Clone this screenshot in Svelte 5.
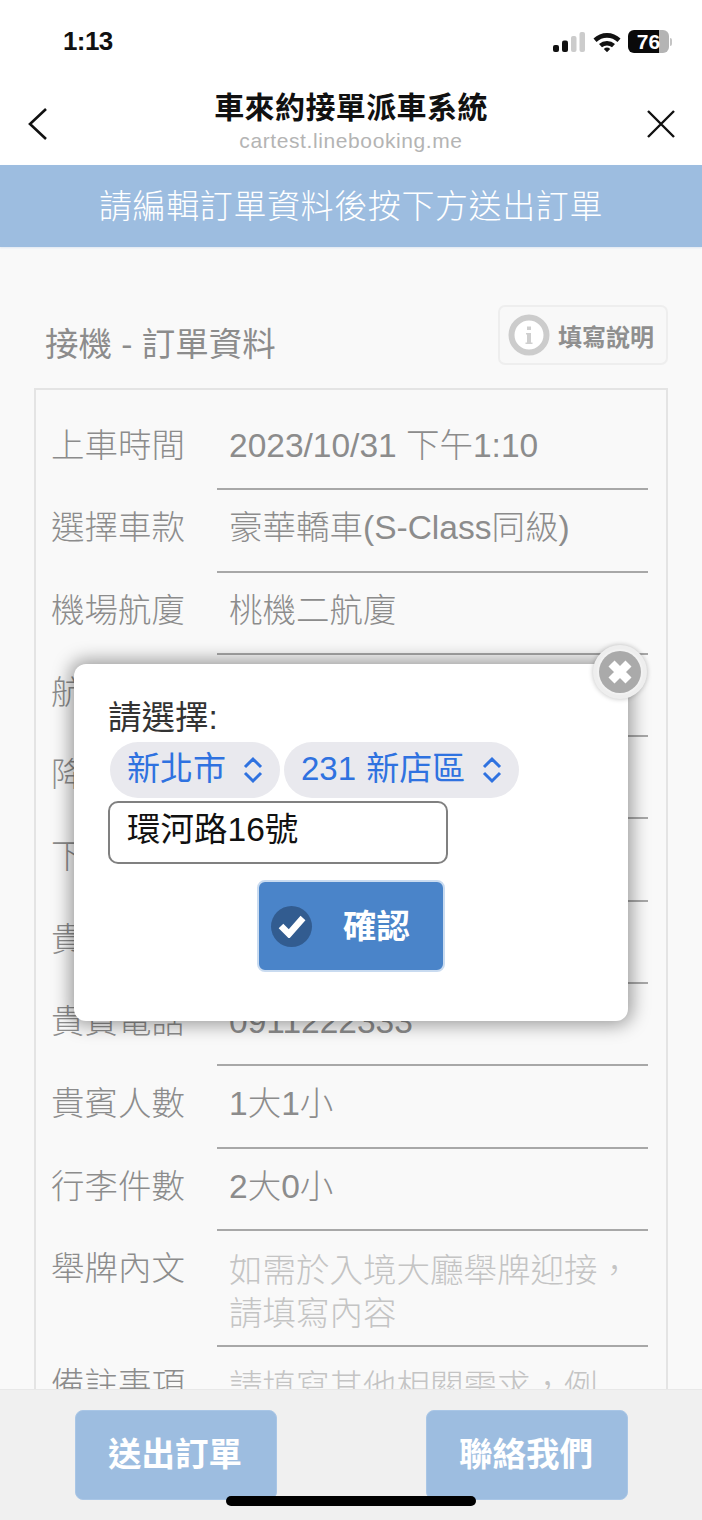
<script>
  const rows = [
    { label: '上車時間', value: '2023/10/31 下午1:10' },
    { label: '選擇車款', value: '豪華轎車(S-Class同級)' },
    { label: '機場航廈', value: '桃機二航廈' },
    { label: '航班編號', value: 'BR123' },
    { label: '降落時間', value: '下午1:10' },
    { label: '下車地址', value: '新北市新店區環河路16號' },
    { label: '貴賓姓名', value: '王小明' },
    { label: '貴賓電話', value: '0911222333' },
    { label: '貴賓人數', value: '1大1小' },
    { label: '行李件數', value: '2大0小' }
  ];
</script>

<div class="page">
  <header class="status">
    <span class="time">1:13</span>
    <div class="status-icons">
      <svg class="signal" width="32" height="20" viewBox="0 0 32 20" aria-hidden="true">
        <rect x="0" y="13" width="6" height="7" rx="2" fill="#111" />
        <rect x="9" y="8.500" width="6" height="11.500" rx="2" fill="#111" />
        <rect x="18" y="4" width="5.500" height="16" rx="2" fill="#ccc" />
        <rect x="26.500" y="0" width="5.500" height="20" rx="2" fill="#ccc" />
      </svg>
      <svg class="wifi" width="28" height="20" viewBox="0 0 28 20" aria-hidden="true">
        <path d="M0.500 6.500 A19.500 19.500 0 0 1 27.500 6.500 L24.500 10 A15 15 0 0 0 3.500 10 Z" fill="#111" />
        <path d="M6 12 A12 12 0 0 1 22 12 L19 15.200 A7.800 7.800 0 0 0 9 15.200 Z" fill="#111" />
        <path d="M10.800 17 A4.800 4.800 0 0 1 17.200 17 L14 20.200 Z" fill="#111" />
      </svg>
      <div class="battery">
        <div class="battery-body"><span>76</span></div>
        <i class="battery-cap"></i>
      </div>
    </div>
  </header>

  <nav class="browser">
    <svg class="nav-icon" width="24" height="36" viewBox="0 0 24 36" aria-hidden="true">
      <path d="M20 3 L4 18 L20 33" fill="none" stroke="#111" stroke-width="2.600" />
    </svg>
    <div class="browser-title">
      <strong>車來約接單派車系統</strong>
      <span>cartest.linebooking.me</span>
    </div>
    <svg class="nav-icon" width="32" height="32" viewBox="0 0 32 32" aria-hidden="true">
      <path d="M3 3 L29 29 M29 3 L3 29" fill="none" stroke="#111" stroke-width="2.400" />
    </svg>
  </nav>

  <div class="banner">請編輯訂單資料後按下方送出訂單</div>

  <main class="content">
    <div class="heading">
      <h1>接機 - 訂單資料</h1>
      <button class="help" type="button">
        <svg width="42" height="42" viewBox="0 0 42 42" aria-hidden="true">
          <circle cx="21" cy="21" r="17.500" fill="#fff" stroke="#ccc" stroke-width="6" />
          <path d="M19 12.500 h4 v3.500 h-4 Z M18 19 h5 v9.500 h1.500 v1.500 h-7 v-1.500 h1.500 v-8 h-1 Z" fill="#cfcfcf" />
        </svg>
        <span>填寫說明</span>
      </button>
    </div>

    <div class="form">
      {#each rows as row}
        <div class="row">
          <span class="label">{row.label}</span>
          <span class="value">{row.value}</span>
        </div>
      {/each}
      <div class="row tall">
        <span class="label">舉牌內文</span>
        <span class="value hint">如需於入境大廳舉牌迎接，<br />請填寫內容</span>
      </div>
      <div class="row tall">
        <span class="label">備註事項</span>
        <span class="value hint">請填寫其他相關需求，例</span>
      </div>
    </div>
  </main>

  <div class="overlay">
    <div class="modal">
      <button class="close" type="button" aria-label="關閉">
        <svg width="42" height="42" viewBox="0 0 42 42" aria-hidden="true">
          <circle cx="21" cy="21" r="21" fill="#aaa" />
          <path d="M12.500 12.500 L29.500 29.500 M29.500 12.500 L12.500 29.500" stroke="#fff" stroke-width="8.500" />
        </svg>
      </button>
      <p class="prompt">請選擇:</p>
      <div class="selects">
        <div class="select">
          <span>新北市</span>
          <svg width="22" height="28" viewBox="0 0 22 28" aria-hidden="true">
            <path d="M3 11 L11 3 L19 11 M3 17 L11 25 L19 17" fill="none" stroke="#2f72e0" stroke-width="3" />
          </svg>
        </div>
        <div class="select">
          <span>231 新店區</span>
          <svg width="22" height="28" viewBox="0 0 22 28" aria-hidden="true">
            <path d="M3 11 L11 3 L19 11 M3 17 L11 25 L19 17" fill="none" stroke="#2f72e0" stroke-width="3" />
          </svg>
        </div>
      </div>
      <div class="address">環河路16號</div>
      <button class="confirm" type="button">
        <span class="check">
          <svg width="28" height="24" viewBox="0 0 28 24" aria-hidden="true">
            <path d="M3 12 L11 20 L25 4" fill="none" stroke="#fff" stroke-width="6.500" />
          </svg>
        </span>
        <span class="confirm-text">確認</span>
      </button>
    </div>
  </div>

  <footer class="footer">
    <button type="button">送出訂單</button>
    <button type="button">聯絡我們</button>
    <i class="home-bar"></i>
  </footer>
</div>

<style>
  :global(body) {
    margin: 0;
    background: #f9f9f9;
  }

  .page {
    position: relative;
    width: 702px;
    height: 1520px;
    overflow: hidden;
    background: #f9f9f9;
    font-family: "Liberation Sans", "Noto Sans CJK TC", sans-serif;
  }

  .status {
    height: 80px;
    box-sizing: border-box;
    background: #fff;
    display: flex;
    align-items: flex-start;
    justify-content: space-between;
    padding: 26px 30px 0 63px;
  }

  .time {
    font-size: 26px;
    line-height: 31px;
    font-weight: 700;
    letter-spacing: -0.6px;
    color: #111;
  }

  .status-icons {
    display: flex;
    align-items: center;
    gap: 7.500px;
    height: 31px;
  }

  .battery {
    display: flex;
    align-items: center;
    gap: 1px;
  }

  .battery-body {
    width: 41px;
    height: 23px;
    border-radius: 6px;
    background: linear-gradient(90deg, #0a0a0a 76%, #b4b4b4 76%);
    display: flex;
    align-items: center;
    justify-content: center;
    color: #fff;
    font-size: 21px;
    font-weight: 700;
  }

  .battery-cap {
    width: 2px;
    height: 8px;
    border-radius: 0 2px 2px 0;
    background: #c4c4c4;
  }

  .browser {
    height: 85px;
    box-sizing: border-box;
    background: #fff;
    display: flex;
    align-items: center;
    justify-content: space-between;
    padding: 0 25px 0 26px;
  }

  .nav-icon {
    margin-top: 3px;
  }

  .browser-title {
    display: flex;
    flex-direction: column;
    align-items: center;
    margin: -3px 0 0 7px;
  }

  .browser-title strong {
    font-size: 30px;
    line-height: 40px;
    font-weight: 700;
    letter-spacing: 0.4px;
    color: #111;
  }

  .browser-title span {
    font-size: 21px;
    line-height: 26px;
    letter-spacing: 0.6px;
    color: #b4b4b4;
  }

  .banner {
    height: 82px;
    background: #9dbde0;
    box-shadow: 0 1px 2px rgba(157, 189, 224, 0.3);
    color: #fff;
    font-size: 33px;
    line-height: 84px;
    text-align: center;
    letter-spacing: 0.6px;
    font-weight: 300;
  }

  .content {
    padding: 58px 34px 0 34px;
  }

  .heading {
    display: flex;
    align-items: flex-start;
    justify-content: space-between;
    height: 83px;
  }

  h1 {
    margin: 20px 0 0 11px;
    font-size: 33.500px;
    line-height: 40px;
    font-weight: 400;
    color: #8c8c8c;
  }

  .help {
    width: 170px;
    height: 60px;
    box-sizing: border-box;
    margin: 0;
    padding: 0 0 0 8px;
    display: flex;
    align-items: center;
    gap: 8px;
    background: #f8f8f8;
    border: 2px solid #eeeeee;
    border-radius: 7px;
    font-family: inherit;
    font-size: 24px;
    font-weight: 700;
    color: #8f8f8f;
  }

  .form {
    border: 2px solid #e4e4e4;
    box-sizing: border-box;
    height: 1050px;
    padding: 18px 18px 0 15px;
    display: flex;
    flex-direction: column;
  }

  .row {
    display: flex;
    height: 82.300px;
    flex: none;
    box-sizing: border-box;
  }

  .label {
    width: 166px;
    flex: none;
    box-sizing: border-box;
    font-size: 33.500px;
    line-height: 50px;
    padding-top: 13px;
    color: #8c8c8c;
    font-weight: 300;
  }

  .value {
    flex: 1;
    box-sizing: border-box;
    padding: 13px 0 0 12px;
    font-size: 33.500px;
    line-height: 50px;
    color: #8c8c8c;
    border-bottom: 2px solid #a8a8a8;
    font-weight: 300;
  }

  .row.tall {
    height: 116px;
  }

  .row.tall + .row.tall {
    height: auto;
  }

  .value.hint {
    color: #c4c4c4;
    line-height: 43px;
    padding-top: 18px;
  }

  .overlay {
    position: absolute;
    left: 74px;
    top: 664px;
  }

  .modal {
    position: relative;
    width: 554px;
    height: 357px;
    box-sizing: border-box;
    padding: 32px 34px 0 34px;
    background: #fff;
    border-radius: 12px;
    box-shadow: 0 0 18px 4px rgba(0, 0, 0, 0.38);
  }

  .close {
    position: absolute;
    top: -19px;
    right: -19px;
    width: 54px;
    height: 54px;
    padding: 0;
    border: 4px solid #eeeeee;
    border-radius: 50%;
    background: #f2f2f2;
    box-shadow: 0 0 5px rgba(0, 0, 0, 0.25);
    display: flex;
    align-items: center;
    justify-content: center;
  }

  .prompt {
    margin: 0;
    font-size: 33.500px;
    line-height: 44px;
    color: #333;
  }

  .selects {
    display: flex;
    gap: 4px;
    margin: 2px 0 0 2px;
  }

  .select {
    height: 56px;
    box-sizing: border-box;
    padding: 0 16px 0 17px;
    border-radius: 28px;
    background: #e9e9ee;
    display: flex;
    align-items: center;
    gap: 16px;
    font-size: 33px;
    line-height: 52px;
    word-spacing: 1px;
    color: #2f72e0;
  }

  .select span {
    margin-top: -3px;
  }

  .address {
    width: 340px;
    height: 63px;
    margin-top: 3px;
    box-sizing: border-box;
    padding-left: 17px;
    border: 2px solid #808080;
    border-radius: 10px;
    background: #fff;
    font-size: 33.500px;
    line-height: 54px;
    color: #111;
  }

  .confirm {
    display: flex;
    align-items: center;
    width: 188px;
    height: 92px;
    margin: 16px 0 0 149px;
    padding: 0 0 0 12px;
    box-sizing: border-box;
    border: 2px solid #c9dbf0;
    border-radius: 8px;
    background: #4a84c9;
    font-family: inherit;
    color: #fff;
  }

  .check {
    width: 41px;
    height: 41px;
    border-radius: 50%;
    background: #325c90;
    display: flex;
    align-items: center;
    justify-content: center;
    flex: none;
  }

  .confirm-text {
    margin: -6px 0 0 31px;
    font-size: 33.500px;
    font-weight: 700;
  }

  .footer {
    position: absolute;
    left: 0;
    right: 0;
    bottom: 0;
    height: 131px;
    box-sizing: border-box;
    background: #f0f0f0;
    border-top: 1px solid #e8e8e8;
    padding: 20px 74px 0 75px;
    display: flex;
    justify-content: space-between;
    align-items: flex-start;
  }

  .footer button {
    width: 202px;
    height: 90px;
    padding: 0 2px 8px 0;
    border: 1px solid #a9c6e6;
    border-radius: 8px;
    background: #9dbde0;
    color: #fff;
    font-family: inherit;
    font-size: 33.500px;
    font-weight: 700;
  }

  .home-bar {
    position: absolute;
    left: 226px;
    top: 106px;
    width: 250px;
    height: 10px;
    border-radius: 5px;
    background: #000;
  }
</style>
